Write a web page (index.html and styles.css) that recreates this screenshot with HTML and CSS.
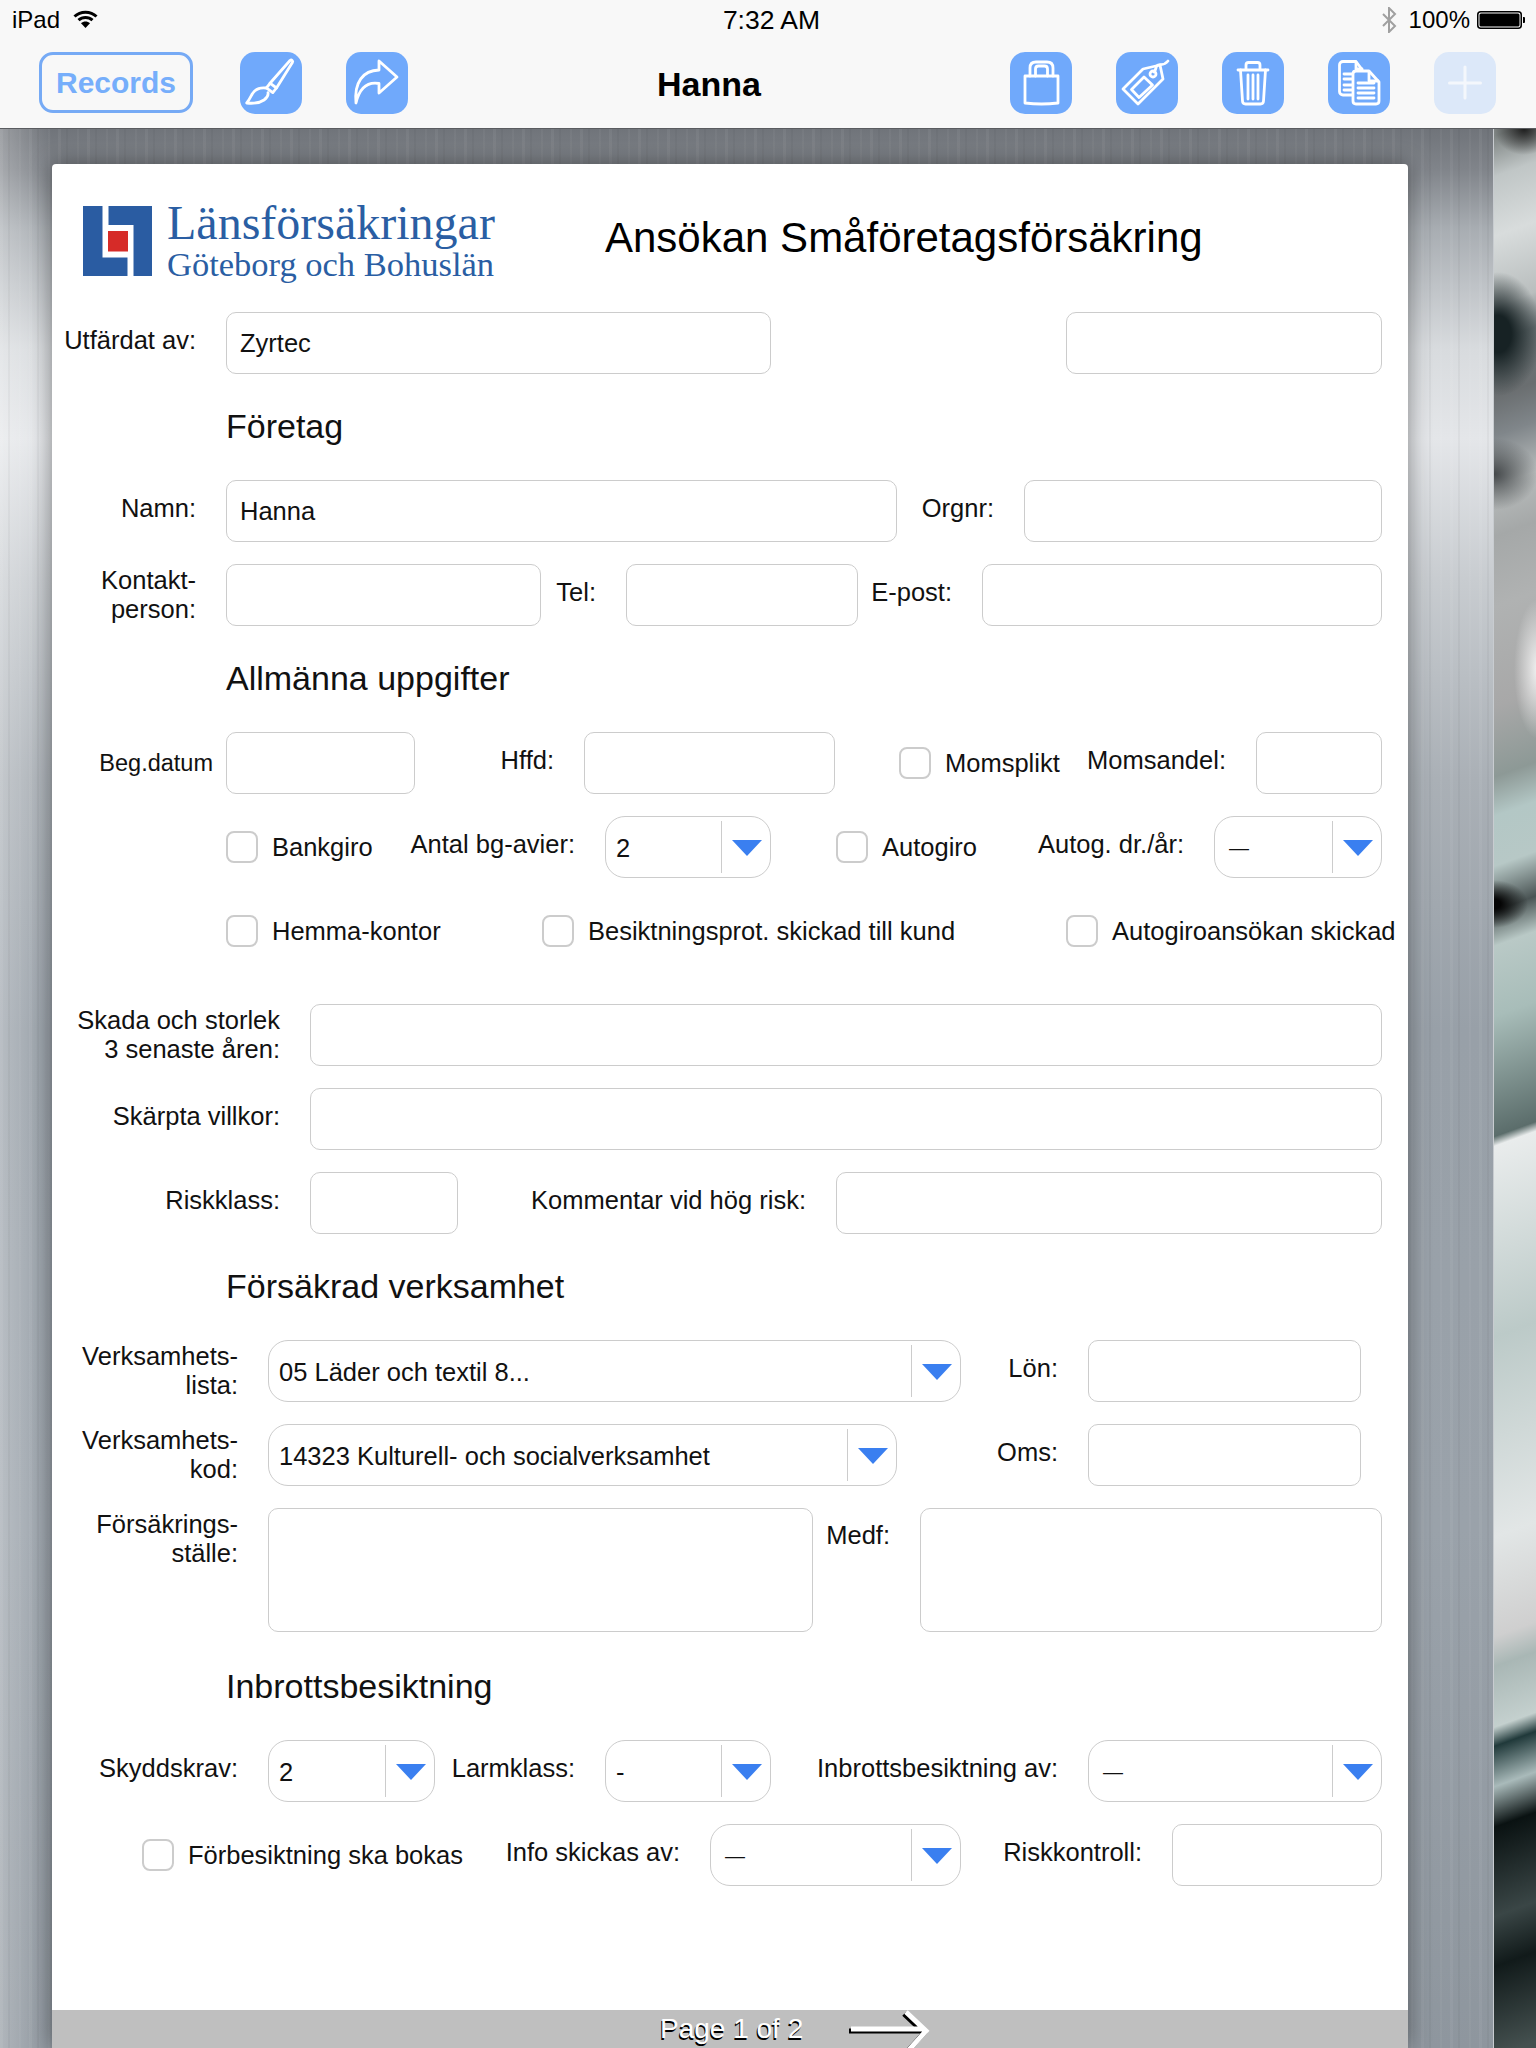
FILE: index.html
```html
<!DOCTYPE html>
<html lang="sv">
<head>
<meta charset="utf-8">
<title>Hanna</title>
<link rel="stylesheet" href="styles.css">
</head>
<body>
<div class="screen">
  <header class="statusbar">
    <div class="status-left">
      <span>iPad</span>
      <svg class="wifi" viewBox="0 0 25 18"><path d="M1.5 6.5C7.5 .8 17.5 .8 23.5 6.5" /><path d="M5.5 10.2C9.5 6.5 15.5 6.5 19.5 10.2" /><path class="wifi-dot" d="M12.5 18L8 13.2c2.6-2.2 6.4-2.2 9 0z"/></svg>
    </div>
    <div class="status-time">7:32 AM</div>
    <div class="status-right">
      <svg class="bluetooth" viewBox="0 0 16 26"><path d="M2 7l12 12-6 6V1l6 6L2 19"/></svg>
      <span>100%</span>
      <svg class="battery" viewBox="0 0 48 18"><rect x=".75" y=".75" width="43.5" height="16.5" rx="3" class="battery-shell"/><rect x="2.5" y="2.5" width="40" height="13" rx="1.5"/><path d="M46 6h1a1 1 0 0 1 1 1v4a1 1 0 0 1-1 1h-1z"/></svg>
    </div>
  </header>

  <nav class="toolbar">
    <button class="records">Records</button>
    <button class="tool tool-brush">
      <svg viewBox="0 0 62 62"><path d="M50 8.5c1.6-1.2 3.4.4 2.4 2L36.5 36l-6.5-4.8z"/><path d="M30 31.500l-3.600 4.300 6.400 4.800 3.600-4.600"/><path d="M26.200 36c-6.500-.8-11 1-14 6-1.600 3-3 6.200-5.500 9 6 .6 13 0 17.300-3 3-2.200 4.500-4.800 4-7.400"/></svg>
    </button>
    <button class="tool tool-share">
      <svg viewBox="0 0 62 62"><path d="M33 9l18 16-18 16V31.500C21 29.500 13.500 36 10 51 8 30 17 18.500 33 18z"/></svg>
    </button>
    <div class="nav-title">Hanna</div>
    <button class="tool tool-lock">
      <svg viewBox="0 0 62 62"><path d="M15 24h33v27c-10 1.200-23 1.200-33 0z"/><path d="M20 24v-8c0-4 2.500-6 6-6h11c3.500 0 6 2 6 6v8"/><path d="M25.500 24v-7c0-2 1-3 3-3h6c2 0 3 1 3 3v7"/></svg>
    </button>
    <button class="tool tool-tag">
      <svg viewBox="0 0 62 62"><path d="M7 37l20-20 17-4 3 14-25 25z"/><path d="M15.500 37.500L28 25l8.500 8L23 45.500z"/><circle cx="37" cy="22" r="3"/><path d="M38 20c3-3 1-6 4-7 3-1 6 1 10-4"/></svg>
    </button>
    <button class="tool tool-trash">
      <svg viewBox="0 0 62 62"><path d="M16 18h30"/><path d="M24 17v-4c0-1.500 1-2.500 2.500-2.500h9c1.500 0 2.500 1 2.500 2.500v4"/><path d="M18.500 18l2 31c.1 1.800 1 3 3 3h15c2 0 2.900-1.200 3-3l2-31"/><path d="M26 23v24M31 23v24M36 23v24"/></svg>
    </button>
    <button class="tool tool-docs">
      <svg viewBox="0 0 62 62"><path d="M25 43h-10c-2 0-3.500-1.500-3.500-3.500V13c0-2 1.500-3.500 3.500-3.500h13l6 8"/><path d="M28 10v7h6"/><path d="M16 22h8M16 27h8M16 33h8M16 38h8"/><path class="doc-front" d="M28 19h13l10 11v19c0 2-1.500 3-3 3H28c-2 0-3-1.500-3-3V22c0-2 1-3 3-3z"/><path d="M41 20v9h9"/><path d="M30 31h16M30 36h16M30 41h16M30 46h16"/></svg>
    </button>
    <button class="tool tool-add">
      <svg viewBox="0 0 62 62"><path d="M31 15v31M15.500 31h31"/></svg>
    </button>
  </nav>

  <main class="stage">
    <div class="metal">
      <article class="card">
        <div class="letterhead">
          <div class="logo">
            <svg class="logo-mark" viewBox="0 0 69 70"><rect width="69" height="70" class="mark-blue"/><path class="mark-white" d="M19.500 0h6v19h25v51h-6V51.500H19.500z"/><rect x="25" y="25" width="20" height="20.500" class="mark-red"/></svg>
            <div class="logo-text">
              <div class="logo-main">Länsförsäkringar</div>
              <div class="logo-sub">Göteborg och Bohuslän</div>
            </div>
          </div>
          <h1 class="form-title">Ansökan Småföretagsförsäkring</h1>
        </div>

        <form class="form">
          <div class="row row-issued">
            <label class="label">Utfärdat av:</label>
            <div class="field">Zyrtec</div>
            <div class="field"></div>
          </div>
          <h2 class="section">Företag</h2>
          <div class="row row-name">
            <label class="label">Namn:</label>
            <div class="field">Hanna</div>
            <label class="label">Orgnr:</label>
            <div class="field"></div>
          </div>
          <div class="row row-contact">
            <label class="label label-double">Kontakt-<br>person:</label>
            <div class="field"></div>
            <label class="label">Tel:</label>
            <div class="field"></div>
            <label class="label">E-post:</label>
            <div class="field"></div>
          </div>
          <h2 class="section">Allmänna uppgifter</h2>
          <div class="row row-dates">
            <label class="label label-small">Beg.datum</label>
            <div class="field"></div>
            <label class="label">Hffd:</label>
            <div class="field"></div>
            <div class="check"><span class="box"></span><span>Momsplikt</span></div>
            <label class="label">Momsandel:</label>
            <div class="field"></div>
          </div>
          <div class="row row-bank">
            <div class="check"><span class="box"></span><span>Bankgiro</span></div>
            <label class="label">Antal bg-avier:</label>
            <div class="select"><span class="select-value">2</span><span class="select-btn"></span></div>
            <div class="check"><span class="box"></span><span>Autogiro</span></div>
            <label class="label">Autog. dr./år:</label>
            <div class="select"><span class="select-value dash">—</span><span class="select-btn"></span></div>
          </div>
          <div class="row row-flags">
            <div class="check"><span class="box"></span><span>Hemma-kontor</span></div>
            <div class="check"><span class="box"></span><span>Besiktningsprot. skickad till kund</span></div>
            <div class="check"><span class="box"></span><span>Autogiroansökan skickad</span></div>
          </div>
          <div class="row row-wide row-damage">
            <label class="label label-double">Skada och storlek<br>3 senaste åren:</label>
            <div class="field"></div>
          </div>
          <div class="row row-wide">
            <label class="label">Skärpta villkor:</label>
            <div class="field"></div>
          </div>
          <div class="row row-risk">
            <label class="label">Riskklass:</label>
            <div class="field"></div>
            <label class="label">Kommentar vid hög risk:</label>
            <div class="field"></div>
          </div>
          <h2 class="section">Försäkrad verksamhet</h2>
          <div class="row row-list">
            <label class="label label-double">Verksamhets-<br>lista:</label>
            <div class="select"><span class="select-value">05 Läder och textil 8...</span><span class="select-btn"></span></div>
            <label class="label">Lön:</label>
            <div class="field"></div>
          </div>
          <div class="row row-code">
            <label class="label label-double">Verksamhets-<br>kod:</label>
            <div class="select"><span class="select-value">14323 Kulturell- och socialverksamhet</span><span class="select-btn"></span></div>
            <label class="label">Oms:</label>
            <div class="field"></div>
          </div>
          <div class="row row-place">
            <label class="label label-top">Försäkrings-<br>ställe:</label>
            <div class="field"></div>
            <label class="label label-top label-medf">Medf:</label>
            <div class="field"></div>
          </div>
          <h2 class="section section-last">Inbrottsbesiktning</h2>
          <div class="row row-protect">
            <label class="label">Skyddskrav:</label>
            <div class="select"><span class="select-value">2</span><span class="select-btn"></span></div>
            <label class="label">Larmklass:</label>
            <div class="select"><span class="select-value">-</span><span class="select-btn"></span></div>
            <label class="label">Inbrottsbesiktning av:</label>
            <div class="select"><span class="select-value dash">—</span><span class="select-btn"></span></div>
          </div>
          <div class="row row-pre">
            <div class="check"><span class="box"></span><span>Förbesiktning ska bokas</span></div>
            <label class="label">Info skickas av:</label>
            <div class="select"><span class="select-value dash">—</span><span class="select-btn"></span></div>
            <label class="label">Riskkontroll:</label>
            <div class="field"></div>
          </div>
        </form>

        <footer class="pager">
          <span class="pager-text">Page 1 of 2</span>
          <svg class="pager-arrow" viewBox="0 0 78 36"><path d="M0 18h72M55 1l20 19-18 20"/></svg>
        </footer>
      </article>
    </div>
    <div class="photo"></div>
  </main>
</div>
</body>
</html>
```

FILE: styles.css
```css
* { box-sizing: border-box; }
html, body { margin: 0; padding: 0; }
body { font-family: "Liberation Sans", Arial, sans-serif; color: #111; }
.screen { width: 1536px; height: 2048px; display: flex; flex-direction: column; overflow: hidden; }

/* status bar */
.statusbar { height: 40px; background: #f8f8f8; padding: 0 11px 0 12px; display: grid; grid-template-columns: 1fr auto 1fr; align-items: center; font-size: 24px; color: #000; }
.status-left { display: flex; align-items: center; gap: 13px; }
.status-time { font-size: 26.5px; padding-left: 6px; }
.status-right { display: flex; align-items: center; justify-content: flex-end; gap: 7px; }
.wifi { width: 25px; height: 18px; fill: none; stroke: #000; stroke-width: 3; margin-top: -2px; }
.wifi-dot { fill: #000; stroke: none; }
.bluetooth { width: 16px; height: 26px; fill: none; stroke: #a0a0a0; stroke-width: 2; margin-right: 5px; }
.battery { width: 48px; height: 18px; fill: #000; }
.battery-shell { fill: none; stroke: #000; stroke-width: 1.5; }

/* toolbar */
.toolbar { height: 89px; background: #f8f8f8; border-bottom: 1px solid #5a5c60; display: flex; align-items: flex-start; padding: 12px 0 0 39px; }
.toolbar button { padding: 0; font-family: inherit; cursor: pointer; }
.records { width: 154px; height: 61px; border: 3px solid #76aaf5; border-radius: 14px; background: transparent; color: #76aefb; font-size: 30px; font-weight: 700; margin: 0; }
.tool { width: 62px; height: 62px; border: 0; border-radius: 15px; background: #70a9fb; flex: none; margin: 0; }
.tool svg { display: block; width: 62px; height: 62px; fill: none; stroke: #fff; stroke-width: 2.8; stroke-linejoin: round; stroke-linecap: round; }
.tool-brush { margin-left: 47px; }
.tool-share { margin-left: 44px; }
.nav-title { width: 602px; height: 62px; line-height: 64px; text-align: center; font-size: 34px; font-weight: 700; color: #000; flex: none; }
.tool-tag, .tool-trash, .tool-docs, .tool-add { margin-left: 44px; }
.tool-add { background: #dce8f9; }
.tool-add svg { stroke: #f4f7fc; stroke-width: 3; }
.doc-front { fill: #70a9fb; }

/* backdrop */
.stage { flex: 1; display: flex; min-height: 0; }
.metal {
  width: 1494px; flex: none; padding: 35px 86px 0 52px; border-right: 1px solid #c8ccd0;
  background:
    repeating-linear-gradient(90deg, rgba(255,255,255,.05) 0 3px, rgba(0,0,0,0) 3px 8px, rgba(0,0,0,.035) 8px 10px, rgba(0,0,0,0) 10px 19px, rgba(255,255,255,.035) 19px 21px, rgba(0,0,0,0) 21px 29px),
    linear-gradient(90deg, rgba(255,255,255,.3) 0, rgba(255,255,255,.12) 30px, rgba(255,255,255,0) 52px),
    linear-gradient(180deg, #70747a 0, #80848a 40px, #a8adb2 100px, #d8dbde 220px, #e4e6e9 310px, #c8ccd0 450px, #aab0b6 650px, #98a0a8 900px, #9aa2aa 1400px, #8e969e 1920px);
}
.photo {
  flex: 1;
  background:
    radial-gradient(ellipse 30px 26px at 30px 0, #1e1e1e, rgba(30,30,30,0)),
    radial-gradient(ellipse 44px 62px at 4px 205px, #172224 30%, rgba(23,34,36,0)),
    radial-gradient(ellipse 44px 36px at 0 345px, #44484a, rgba(68,72,74,0)),
    radial-gradient(ellipse 24px 70px at 44px 540px, #f2f2f2, rgba(242,242,242,0)),
    radial-gradient(ellipse 34px 24px at 0 775px, #050505 20%, rgba(5,5,5,0)),
    linear-gradient(160deg, #7f8584 7px, #c0c6c6 45px, #d8dcdc 101px, #b9bebe 167px, #6d7678 200px, #6a6e70 252px, #80868a 289px, #b8bcbc 336px, #a5a8a8 383px, #b0b2b2 449px, #a8a8a8 543px, #8d9996 609px, #b3c7c5 646px, #b7c8c6 693px, #4a5454 735px, #b9c9c6 768px, #a8bdb9 834px, #5b6d6b 947px, #e9ecec 956px, #bccac8 1135px, #e2e6e6 1323px, #cfcfcf 1417px, #a9b7b5 1445px, #c4d0ce 1502px, #20393a 1520px, #a9baba 1558px, #0a1212 1596px, #3a4646 1680px, #111a1a 1727px, #44504f 1811px);
}

/* card */
.card { height: 1884px; width: 1356px; background: #fff; border-radius: 4px 4px 0 0; box-shadow: 0 0 22px rgba(0,0,0,.42); display: flex; flex-direction: column; }
.letterhead { height: 148px; display: flex; align-items: flex-start; padding: 42px 0 0 31px; }
.logo { display: flex; gap: 15px; width: 522px; flex: none; }
.logo-mark { width: 69px; height: 70px; flex: none; }
.mark-blue { fill: #2a5ca2; }
.mark-white { fill: #fff; }
.mark-red { fill: #d62b28; }
.logo-text { font-family: "Liberation Serif", "Times New Roman", serif; color: #2a5ea3; white-space: nowrap; margin-top: -8px; }
.logo-main { font-size: 48px; line-height: 50px; }
.logo-sub { font-size: 34.5px; line-height: 36px; margin-top: -2px; }
.form-title { margin: 6px 0 0 0; font-size: 42px; line-height: 52px; font-weight: 400; color: #000; white-space: nowrap; }

/* form */
.form { flex: 1; display: flex; flex-direction: column; gap: 22px; }
.row { display: grid; height: 62px; align-items: center; }
.section { margin: 0 0 0 174px; height: 62px; line-height: 60px; font-size: 34px; font-weight: 400; color: #111; }
.section-last { height: 64px; line-height: 64px; }
.label { display: block; text-align: right; padding-right: 30px; font-size: 25.5px; line-height: 29px; padding-bottom: 5px; white-space: nowrap; }
.label-double { padding-bottom: 0; }
.label-small { font-size: 23.5px; padding-right: 13px; padding-bottom: 0; }
.label-top { align-self: start; }
.field { height: 62px; background: #fff; border: 1px solid #ccc; border-radius: 10px; font-size: 25.5px; line-height: 60px; padding-left: 13px; }
.select { height: 62px; border: 1px solid #ccc; border-radius: 20px; font-size: 25.5px; display: flex; align-items: center; padding-left: 10px; }
.select-value { flex: 1; white-space: nowrap; padding-top: 2px; }
.dash { font-size: 20px; padding-left: 4px; }
.select-btn { width: 49px; height: 52px; flex: none; border-left: 1px solid #ccc; display: flex; align-items: center; justify-content: center; }
.select-btn::after { content: ""; width: 0; height: 0; border-top: 16px solid #3a7ff0; border-left: 15px solid transparent; border-right: 15px solid transparent; margin-left: 1px; margin-top: 2px; }
.check { display: flex; align-items: center; gap: 14px; font-size: 25.5px; line-height: 30px; white-space: nowrap; }
.box { width: 32px; height: 32px; flex: none; border: 2px solid #ccc; border-radius: 8px; }

.row-issued { grid-template-columns: 174px 545px 295px 316px; }
.row-issued .field:last-child { grid-column: 4; }
.row-name { grid-template-columns: 174px 671px 127px 358px; }
.row-contact { grid-template-columns: 174px 315px 85px 232px 124px 400px; }
.row-dates { grid-template-columns: 174px 189px 169px 251px 64px 183px 174px 126px; }
.row-dates .check { grid-column: 6; }
.row-bank { grid-template-columns: 174px 150px 229px 166px 65px 150px 228px 168px; }
.row-bank .check:first-child { grid-column: 2; }
.row-bank .check:nth-child(4) { grid-column: 6; }
.row-flags { grid-template-columns: 174px 316px 524px 342px; margin-bottom: 20px; }
.row-flags .check:first-child { grid-column: 2; }
.row-wide { grid-template-columns: 258px 1072px; }
.row-risk { grid-template-columns: 258px 148px 378px 546px; }
.row-list { grid-template-columns: 216px 693px 127px 273px; }
.row-code { grid-template-columns: 216px 629px 191px 273px; }
.row-place { grid-template-columns: 216px 545px 107px 462px; height: 124px; }
.row-place .field { height: 124px; }
.row-place .label { padding-top: 2px; }
.row-place .label-medf { padding-top: 13px; }
.row-protect { grid-template-columns: 216px 167px 170px 166px 317px 294px; }
.row-pre { grid-template-columns: 90px 320px 248px 251px 211px 210px; }
.row-pre .check { grid-column: 2; }

/* footer */
.pager { height: 38px; background: #bfbfbf; display: flex; align-items: center; gap: 48px; padding-left: 608px; overflow: hidden; flex: none; }
.pager-text { font-size: 28px; color: #fff; text-shadow: -1px 2px 0 #000; white-space: nowrap; }
.pager-arrow { width: 78px; height: 36px; flex: none; fill: none; stroke: #fff; stroke-width: 5; filter: drop-shadow(-2px 2px 0 #000); overflow: visible; }
```
